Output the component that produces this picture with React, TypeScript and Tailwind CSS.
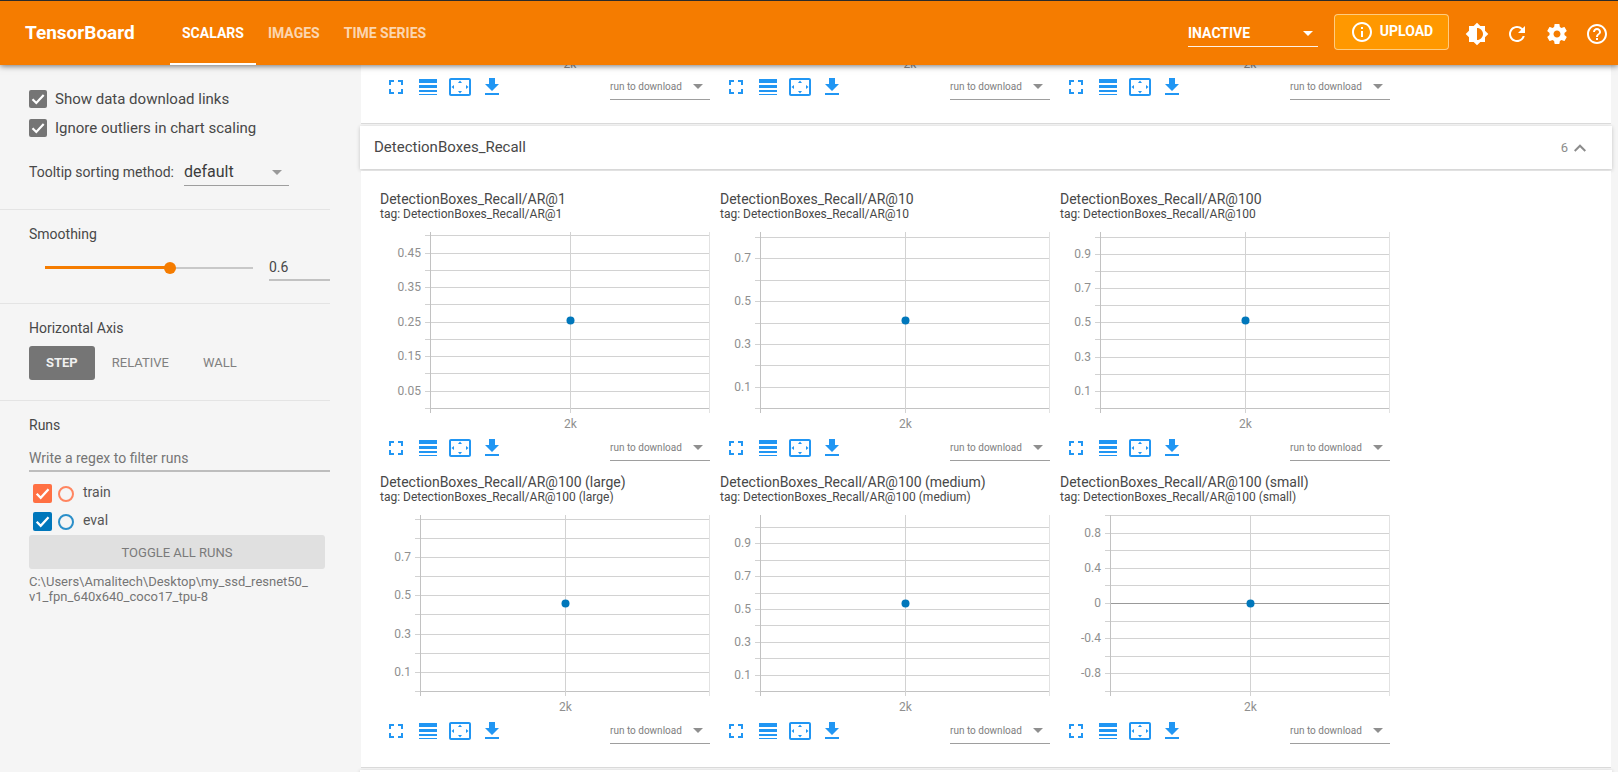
import React from "react";
import {
  MdBrightness6,
  MdFullscreen,
  MdHelpOutline,
  MdInfoOutline,
  MdLineWeight,
  MdRefresh,
  MdSettingsOverscan,
} from "react-icons/md";

type Tick = { value: number; label?: string };

type ChartSpec = {
  title: string;
  axisX: number;
  top: number;
  ticks: Tick[];
  pointY: number;
  zeroIndex: number;
};

const PLOT_BOTTOM = 176;
const PLOT_RIGHT = 330;

function makeTicks(count: number, labels: Record<number, string>): Tick[] {
  return Array.from({ length: count }, (_, i) => ({ value: i, label: labels[i] }));
}

const charts: ChartSpec[] = [
  {
    title: "DetectionBoxes_Recall/AR@1",
    axisX: 50,
    top: 3.4,
    ticks: makeTicks(11, { 1: "0.05", 3: "0.15", 5: "0.25", 7: "0.35", 9: "0.45" }),
    pointY: 88.5,
    zeroIndex: 0,
  },
  {
    title: "DetectionBoxes_Recall/AR@10",
    axisX: 40,
    top: 5,
    ticks: makeTicks(9, { 1: "0.1", 3: "0.3", 5: "0.5", 7: "0.7" }),
    pointY: 88.5,
    zeroIndex: 0,
  },
  {
    title: "DetectionBoxes_Recall/AR@100",
    axisX: 40,
    top: 4.5,
    ticks: makeTicks(11, { 1: "0.1", 3: "0.3", 5: "0.5", 7: "0.7", 9: "0.9" }),
    pointY: 88.5,
    zeroIndex: 0,
  },
  {
    title: "DetectionBoxes_Recall/AR@100 (large)",
    axisX: 40,
    top: 3.6,
    ticks: makeTicks(10, { 1: "0.1", 3: "0.3", 5: "0.5", 7: "0.7" }),
    pointY: 88.5,
    zeroIndex: 0,
  },
  {
    title: "DetectionBoxes_Recall/AR@100 (medium)",
    axisX: 40,
    top: 12,
    ticks: makeTicks(11, { 1: "0.1", 3: "0.3", 5: "0.5", 7: "0.7", 9: "0.9" }),
    pointY: 88.5,
    zeroIndex: 0,
  },
  {
    title: "DetectionBoxes_Recall/AR@100 (small)",
    axisX: 50,
    top: 0,
    ticks: makeTicks(11, { 1: "-0.8", 3: "-0.4", 5: "0", 7: "0.4", 9: "0.8" }),
    pointY: 88.5,
    zeroIndex: 5,
  },
];

function Chart({ spec }: { spec: ChartSpec }) {
  const { axisX, ticks, top, pointY, zeroIndex } = spec;
  const step = (PLOT_BOTTOM - top) / (ticks.length - 1);
  const midX = Math.round((axisX + PLOT_RIGHT) / 2);
  return (
    <svg className="block h-[200px] w-full" viewBox="0 0 330 200" role="img" aria-label={spec.title}>
      {ticks.map((t) => {
        const y = Math.round(PLOT_BOTTOM - t.value * step) + 0.5;
        return (
          <g key={t.value}>
            <line x1={axisX - 5} x2={PLOT_RIGHT} y1={y} y2={y} stroke="#d2d2d2" />
            {t.value === zeroIndex && (
              <line x1={axisX} x2={PLOT_RIGHT} y1={y} y2={y} stroke={zeroIndex ? "#999" : "#c2c2c2"} />
            )}
            {t.label && (
              <text x={axisX - 9} y={y + 3.5} textAnchor="end" fontSize="12" fill="#8f8f8f">
                {t.label}
              </text>
            )}
          </g>
        );
      })}
      <line x1={axisX + 0.5} x2={axisX + 0.5} y1="0" y2="181" stroke="#c2c2c2" />
      <line x1={midX + 0.5} x2={midX + 0.5} y1="0" y2="181" stroke="#d2d2d2" />
      <line x1="329.5" x2="329.5" y1="0" y2="181" stroke="#e2e2e2" />
      <circle cx={midX + 0.5} cy={pointY} r="4" fill="#0077bb" />
      <text x={midX + 0.5} y="196" textAnchor="middle" fontSize="12" fill="#8f8f8f">
        2k
      </text>
    </svg>
  );
}

function Caret({ className }: { className: string }) {
  return (
    <svg className={className} viewBox="0 0 10 5" fill="currentColor" aria-hidden="true">
      <path d="M0 0h10L5 5z" />
    </svg>
  );
}

function IconButton({ label, children }: { label: string; children: React.ReactNode }) {
  return (
    <button type="button" aria-label={label} className="flex size-8 items-center justify-center">
      {children}
    </button>
  );
}

function ChartToolbar() {
  return (
    <div className="flex h-8 items-end justify-between">
      <div className="flex text-2xl text-[#2196f3]">
        <IconButton label="Toggle fullscreen">
          <MdFullscreen />
        </IconButton>
        <IconButton label="Toggle y-axis log scale">
          <MdLineWeight />
        </IconButton>
        <IconButton label="Fit domain to data">
          <MdSettingsOverscan />
        </IconButton>
        <IconButton label="Download chart">
          <svg className="size-6" viewBox="0 0 24 24" fill="currentColor" aria-hidden="true">
            <path d="M19 9h-4V3H9v6H5l7 7 7-7zM5 18v2h14v-2H5z" />
          </svg>
        </IconButton>
      </div>
      <div className="relative mb-[3px] w-[100px]">
        <select
          aria-label="run to download"
          className="block h-[27px] w-full appearance-none border-b border-[#9e9e9e] bg-transparent text-[10px] text-[#808080]"
        >
          <option>run to download</option>
        </select>
        <Caret className="pointer-events-none absolute top-[11px] right-[7px] h-[5px] w-[10px] text-[#8f8f8f]" />
      </div>
    </div>
  );
}

function Checkbox({ className, label, size }: { className: string; label: string; size: string }) {
  return (
    <span className={`grid ${size}`}>
      <input
        type="checkbox"
        defaultChecked
        aria-label={label}
        className={`peer col-start-1 row-start-1 size-full appearance-none rounded-[2px] ${className}`}
      />
      <svg
        className="pointer-events-none invisible col-start-1 row-start-1 size-full peer-checked:visible"
        viewBox="0 0 18 18"
        fill="none"
        stroke="#fff"
        strokeWidth="2.2"
        aria-hidden="true"
      >
        <path d="M3.5 9.2l3.8 3.8 7.4-8" />
      </svg>
    </span>
  );
}

function Run({ name, box, ring }: { name: string; box: string; ring: string }) {
  return (
    <div className="flex h-[19px] items-start">
      <Checkbox className={box} label={name} size="size-[19px]" />
      <button type="button" aria-label={`Show only ${name}`} className={`mt-0.5 ml-[6px] size-4 rounded-full border-2 ${ring}`} />
      <span className="ml-[9px] text-[14px] leading-4 text-[#555]">{name}</span>
    </div>
  );
}

function Sidebar() {
  return (
    <aside className="w-[330px] shrink-0 text-[14px] text-[#484848]">
      <section className="border-b border-[#e4e4e4] pt-[25px] pb-[23px] pl-[29px]">
        <div className="flex flex-col gap-[11px] text-[15px]">
          <label className="flex h-[18px] items-center gap-2">
            <Checkbox className="bg-[#757575]" label="Show data download links" size="size-[18px]" />
            Show data download links
          </label>
          <label className="flex h-[18px] items-center gap-2">
            <Checkbox className="bg-[#757575]" label="Ignore outliers in chart scaling" size="size-[18px]" />
            Ignore outliers in chart scaling
          </label>
        </div>
        <div className="mt-[21px] flex items-center gap-[10px]">
          <label htmlFor="tooltip-sort">Tooltip sorting method:</label>
          <div className="relative w-[105px]">
            <select
              id="tooltip-sort"
              className="block h-7 w-full appearance-none border-b border-[#9e9e9e] bg-transparent text-base text-[#3c3c3c]"
            >
              <option>default</option>
            </select>
            <Caret className="pointer-events-none absolute top-3 right-[7px] h-[5px] w-[10px] text-[#999]" />
          </div>
        </div>
      </section>

      <section className="border-b border-[#e4e4e4] pt-[14px] pb-[22px] pl-[29px]">
        <label htmlFor="smoothing" className="block leading-5">
          Smoothing
        </label>
        <div className="mt-[10px] flex items-center gap-[10px] pl-[10px]">
          <input
            id="smoothing"
            type="range"
            min="0"
            max="1"
            step="0.1"
            defaultValue="0.6"
            className="h-3 min-w-0 flex-1 appearance-none bg-transparent [&::-webkit-slider-runnable-track]:h-3 [&::-webkit-slider-runnable-track]:[background:linear-gradient(#f57c00,#f57c00)_6px_50%/calc((100%_-_12px)*0.6)_3px_no-repeat,linear-gradient(#c8c8c8,#c8c8c8)_6px_50%/calc(100%_-_12px)_2px_no-repeat] [&::-webkit-slider-thumb]:size-3 [&::-webkit-slider-thumb]:appearance-none [&::-webkit-slider-thumb]:rounded-full [&::-webkit-slider-thumb]:bg-[#f57c00]"
          />
          <input
            type="text"
            aria-label="Smoothing value"
            defaultValue="0.6"
            className="h-[27px] w-[61px] border-b-2 border-[#c2c2c2] bg-transparent"
          />
        </div>
      </section>

      <section className="border-b border-[#e4e4e4] pt-[14px] pb-5 pl-[29px]">
        <h3 className="leading-5">Horizontal Axis</h3>
        <div className="mt-2 flex text-[13px] text-[#808080]">
          <button type="button" className="h-[34px] rounded-[3px] bg-[#757575] px-[17px] font-bold text-[#f0f0f0]">
            STEP
          </button>
          <button type="button" className="h-[34px] px-[17px]">
            RELATIVE
          </button>
          <button type="button" className="h-[34px] px-[17px]">
            WALL
          </button>
        </div>
      </section>

      <section className="pt-[14px] pl-[29px]">
        <h3 className="leading-5">Runs</h3>
        <input
          type="text"
          aria-label="Write a regex to filter runs"
          placeholder="Write a regex to filter runs"
          className="mt-[10px] block h-[27px] w-full border-b-2 border-[#bdbdbd] bg-transparent placeholder:text-[#757575]"
        />
        <div className="mt-3 flex flex-col gap-[9px] pl-1">
          <Run name="train" box="bg-[#ff7043]" ring="border-[#ff8560]" />
          <Run name="eval" box="bg-[#0077bb]" ring="border-[#2b8fc9]" />
        </div>
        <div className="pr-[5px]">
          <button type="button" className="mt-1 block h-[34px] w-full rounded-[3px] bg-[#e0e0e0] pt-px text-[13px] text-[#7a7a7a]">
            TOGGLE ALL RUNS
          </button>
          <p className="mt-[5px] text-[13px] leading-[15px] text-[#757575]">
            C:\Users\Amalitech\Desktop\my_ssd_resnet50_
            <wbr />
            v1_fpn_640x640_coco17_tpu-8
          </p>
        </div>
      </section>
    </aside>
  );
}

function Header() {
  return (
    <header className="relative z-10 flex h-[65px] shrink-0 items-stretch justify-between border-t border-[#2b2b2b] bg-[#f57c00] text-white shadow-[0_1px_6px_rgba(0,0,0,0.55)]">
      <div className="flex">
        <h1 className="flex w-[170px] items-center pt-px pl-[25px] text-[19px] font-bold">TensorBoard</h1>
        <nav className="flex text-[14px] font-bold">
          <a href="#scalars" className="flex items-center border-b-2 border-white px-3 pt-[3px]">
            SCALARS
          </a>
          <a href="#images" className="flex items-center border-b-2 border-transparent px-3 pt-[3px] text-white/70">
            IMAGES
          </a>
          <a href="#timeseries" className="flex items-center border-b-2 border-transparent px-3 pt-[3px] text-white/70">
            TIME SERIES
          </a>
        </nav>
      </div>
      <div className="flex items-center">
        <div className="relative mr-4 w-[130px]">
          <select
            aria-label="Dashboards"
            className="block h-[27px] w-full appearance-none border-b border-white/90 bg-transparent pt-0.5 text-[14px] font-bold"
          >
            <option>INACTIVE</option>
          </select>
          <Caret className="pointer-events-none absolute top-[11px] right-[5px] h-[5px] w-[10px]" />
        </div>
        <button
          type="button"
          className="mr-2 mb-[3px] flex h-9 w-[115px] items-center justify-center gap-[6px] rounded border border-white/50 bg-[#ff9800] text-[14px] font-bold"
        >
          <MdInfoOutline className="size-6" />
          UPLOAD
        </button>
        <div className="mr-px flex pt-px text-2xl">
          <button type="button" aria-label="Toggle dark mode" className="flex size-10 items-center justify-center">
            <MdBrightness6 />
          </button>
          <button type="button" aria-label="Reload" className="flex size-10 items-center justify-center">
            <MdRefresh />
          </button>
          <button type="button" aria-label="Settings" className="flex size-10 items-center justify-center">
            <svg className="size-6" viewBox="0 0 24 24" fill="currentColor" aria-hidden="true">
              <path d="M19.43 12.98c.04-.32.07-.64.07-.98s-.03-.66-.07-.98l2.11-1.65c.19-.15.24-.42.12-.64l-2-3.46c-.12-.22-.39-.3-.61-.22l-2.49 1c-.52-.4-1.08-.73-1.69-.98l-.38-2.65C14.46 2.18 14.25 2 14 2h-4c-.25 0-.46.18-.49.42l-.38 2.65c-.61.25-1.17.59-1.69.98l-2.49-1c-.23-.09-.49 0-.61.22l-2 3.46c-.13.22-.07.49.12.64l2.11 1.65c-.04.32-.07.65-.07.98s.03.66.07.98l-2.11 1.65c-.19.15-.24.42-.12.64l2 3.46c.12.22.39.3.61.22l2.49-1c.52.4 1.08.73 1.69.98l.38 2.65c.03.24.24.42.49.42h4c.25 0 .46-.18.49-.42l.38-2.65c.61-.25 1.17-.59 1.69-.98l2.49 1c.23.09.49 0 .61-.22l2-3.46c.12-.22.07-.49-.12-.64l-2.11-1.65zM12 15.5c-1.93 0-3.5-1.57-3.5-3.5s1.57-3.5 3.5-3.5 3.5 1.57 3.5 3.5-1.57 3.5-3.5 3.5z" />
            </svg>
          </button>
          <button type="button" aria-label="Help" className="flex size-10 items-center justify-center">
            <MdHelpOutline />
          </button>
        </div>
      </div>
    </header>
  );
}

function Main() {
  return (
    <main className="ml-[30px] min-w-0 flex-1 pr-[6px]">
      <section className="mx-px flex flex-wrap gap-[10px] border-b border-[#dcdcdc] bg-white px-[19px] pb-5">
        {["a", "b", "c"].map((id) => (
          <article key={id} className="w-[330px]">
            <svg className="block h-[6px] w-full overflow-visible" viewBox="0 0 330 6" aria-hidden="true">
              <text x="190" y="3" textAnchor="middle" fontSize="12" fill="#8c8c8c">
                2k
              </text>
            </svg>
            <ChartToolbar />
          </article>
        ))}
      </section>
      <button
        type="button"
        className="mt-[2px] flex h-[43px] w-full items-center justify-between bg-white pr-[26px] pl-[14px] text-[15px] text-[#484848] shadow-[0_1px_4px_rgba(0,0,0,0.2)]"
      >
        DetectionBoxes_Recall
        <span className="flex items-center gap-[6px] text-[13px] text-[#8c8c8c]">
          6
          <svg className="h-2 w-3" viewBox="0 0 12 8" fill="none" stroke="currentColor" strokeWidth="2" aria-hidden="true">
            <path d="M0.7 7L6 1.7 11.3 7" />
          </svg>
        </span>
      </button>
      <section className="mx-px mt-[2px] flex flex-wrap gap-[10px] border-b border-[#dcdcdc] bg-white px-[19px] py-5">
        {charts.map((spec) => (
          <article key={spec.title} className="w-[330px]">
            <h2 className="text-[14px] leading-4 text-[#484848]">{spec.title}</h2>
            <p className="mb-[10px] text-[12px] leading-[15px] text-[#484848]">tag: {spec.title}</p>
            <Chart spec={spec} />
            <ChartToolbar />
          </article>
        ))}
      </section>
      <div className="mt-[2px] h-11 bg-white shadow-[0_1px_4px_rgba(0,0,0,0.2)]" />
    </main>
  );
}

export default function App() {
  return (
    <div className="flex h-screen flex-col overflow-hidden bg-[#f5f5f5] font-[Roboto,sans-serif]">
      <Header />
      <div className="flex min-h-0 flex-1">
        <Sidebar />
        <Main />
      </div>
    </div>
  );
}
